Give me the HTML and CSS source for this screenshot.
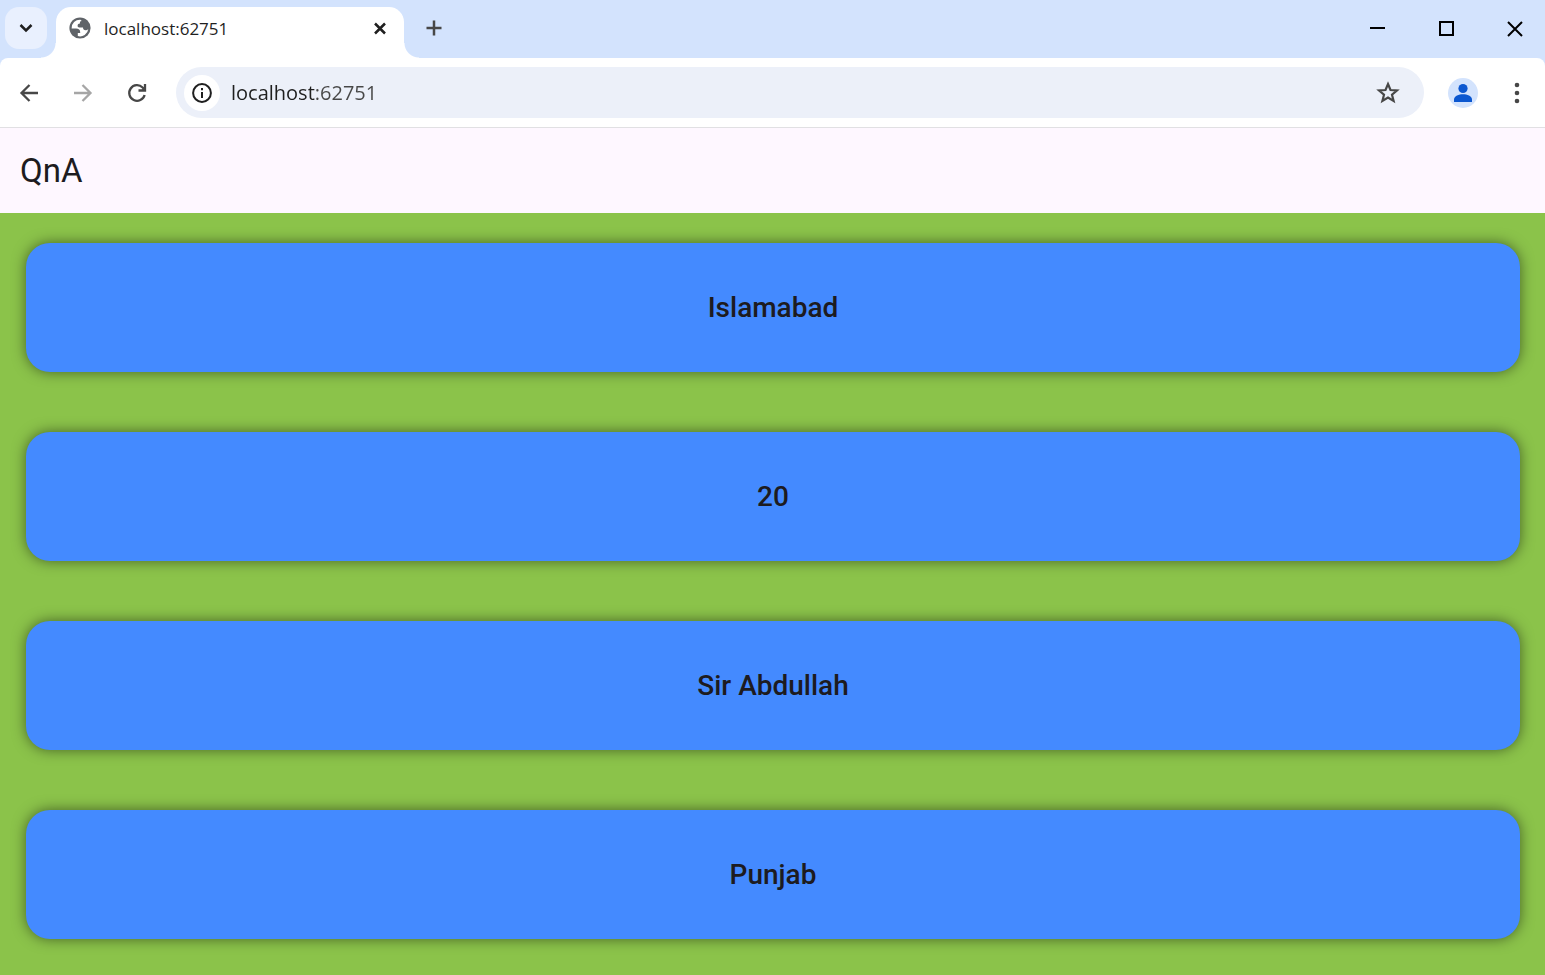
FILE: index.html
```html
<!DOCTYPE html>
<html lang="en">
<head>
<meta charset="utf-8">
<meta name="viewport" content="width=device-width, initial-scale=1">
<title>QnA</title>
<link rel="stylesheet" href="styles.css">
</head>
<body>
<div class="window">
  <header class="tab-strip">
    <button class="tab-search" aria-label="Search tabs">
      <svg width="14" height="10" viewBox="0 0 14 10"><path d="M1.5 2 7 7.5 12.5 2" fill="none" stroke="#1f1f1f" stroke-width="2.5"/></svg>
    </button>
    <div class="tab">
      <svg class="favicon" width="24" height="24" viewBox="0 0 24 24">
        <circle cx="12" cy="11" r="10.6" fill="#5f6368"/>
        <path d="M12.500 2.700A8.400 8.400 0 0 0 3.600 11.500H8c2.800 0 4.200 1.300 4.200 3.400v1.200H9.800v3a8.400 8.400 0 0 0 10.500-7.100c-.8.900-1.700 1.300-2.800 1.200-1.600-.1-2.500-1-2.500-2.800h-3.800c-1 0-1.600-.6-1.600-1.600 0-1.800 1-2.300 2.300-2.400 0-1.500.3-2.300 1.800-2.300z" fill="#fff"/>
      </svg>
      <span class="tab-title">localhost:62751</span>
      <button class="tab-close" aria-label="Close tab">
        <svg width="14" height="14" viewBox="0 0 14 14"><path d="M2 1.500l10 10m0-10l-10 10" stroke="#1f1f1f" stroke-width="2.500"/></svg>
      </button>
    </div>
    <button class="new-tab" aria-label="New tab">
      <svg width="16" height="16" viewBox="0 0 16 16"><path d="M8 .5v15M.5 8h15" stroke="#474747" stroke-width="2.500"/></svg>
    </button>
    <div class="window-controls">
      <button aria-label="Minimize"><svg width="16" height="16" viewBox="0 0 16 16"><path d="M0 7h15" stroke="#000" stroke-width="2"/></svg></button>
      <button aria-label="Maximize"><svg width="16" height="16" viewBox="0 0 16 16"><path d="M1 1h13v13H1z" fill="none" stroke="#000" stroke-width="2"/></svg></button>
      <button aria-label="Close"><svg width="16" height="16" viewBox="0 0 16 16"><path d="M1 1l14 14M15 1L1 15" stroke="#000" stroke-width="2"/></svg></button>
    </div>
  </header>

  <nav class="toolbar">
    <div class="nav-buttons">
      <button aria-label="Back"><svg width="20" height="20" viewBox="0 0 20 20"><path d="M19 10H2.500M10.500 2l-8 8 8 8" fill="none" stroke="#474747" stroke-width="2.300"/></svg></button>
      <button aria-label="Forward" disabled><svg width="20" height="20" viewBox="0 0 20 20"><path d="M1 10h16.500M9.500 2l8 8-8 8" fill="none" stroke="#a6a6a6" stroke-width="2.300"/></svg></button>
      <button aria-label="Reload"><svg width="20" height="20" viewBox="0 0 20 20"><path d="M17.600 12A7.800 7.800 0 1 1 15.600 4.500L17 6" fill="none" stroke="#474747" stroke-width="2.300"/><path d="M11.500 7.500h6.500V1" fill="none" stroke="#474747" stroke-width="2.300"/><path d="M14 7.500L18 3.500v4z" fill="#474747"/></svg></button>
    </div>
    <div class="address-bar">
      <button class="site-info" aria-label="Site information">
        <svg width="20" height="20" viewBox="0 0 20 20"><circle cx="10" cy="10" r="8.900" fill="none" stroke="#1f1f1f" stroke-width="2"/><path d="M10 9v6M10 5v2.200" stroke="#1f1f1f" stroke-width="2"/></svg>
      </button>
      <input class="address" type="text" aria-label="Address" value="localhost:62751">
      <button class="bookmark" aria-label="Bookmark this tab">
        <svg width="24" height="24" viewBox="0 0 24 24"><path d="M12 3l2.500 6 6.500.5-5 4.200 1.600 6.300-5.600-3.400L6.400 20 8 13.700 3 9.500 9.500 9z" fill="none" stroke="#474747" stroke-width="2.200"/></svg>
      </button>
    </div>
    <button class="profile" aria-label="Profile">
      <svg width="30" height="30" viewBox="0 0 30 30"><circle cx="15" cy="10.500" r="4.600" fill="#0b57d0"/><path d="M6 24v-2.500C6 18 11 16.300 15 16.300s9 1.700 9 5.200V24z" fill="#0b57d0"/></svg>
    </button>
    <button class="menu" aria-label="Menu">
      <svg width="6" height="22" viewBox="0 0 6 22" fill="#474747"><circle cx="3" cy="3" r="2.300"/><circle cx="3" cy="11" r="2.300"/><circle cx="3" cy="19" r="2.300"/></svg>
    </button>
  </nav>

  <div class="app-bar"><h1>QnA</h1></div>
  <main class="answers">
    <div class="card">Islamabad</div>
    <div class="card">20</div>
    <div class="card">Sir Abdullah</div>
    <div class="card">Punjab</div>
  </main>
</div>
</body>
</html>
```
FILE: styles.css
```css
* { box-sizing: border-box; }

body {
  margin: 0;
  font-family: "Open Sans", "Noto Sans", sans-serif;
  background: #8bc34a;
}

button {
  display: flex;
  align-items: center;
  justify-content: center;
  flex: none;
  padding: 0;
  border: 0;
  background: none;
}

svg { display: block; flex: none; }

.window {
  display: flex;
  flex-direction: column;
  min-height: 100vh;
  background: #d3e3fd;
}

/* Tab strip */
.tab-strip {
  display: flex;
  align-items: flex-start;
  height: 58px;
  padding: 7px 0 0 5px;
}

.tab-search {
  width: 42px;
  height: 42px;
  border-radius: 14px;
  background: #e9f0fe;
}

.tab {
  position: relative;
  display: flex;
  align-items: center;
  width: 348px;
  height: 51px;
  margin-left: 9px;
  padding: 0 14px 8px 12px;
  border-radius: 15px 15px 0 0;
  background: #fff;
}

.tab::before,
.tab::after {
  content: "";
  position: absolute;
  bottom: 0;
  width: 15px;
  height: 15px;
}

.tab::before {
  right: 100%;
  background: radial-gradient(circle at 0 0, transparent 14px, #fff 15px);
}

.tab::after {
  left: 100%;
  background: radial-gradient(circle at 100% 0, transparent 14px, #fff 15px);
}

.tab-title {
  flex: 1;
  margin-left: 12px;
  font-size: 17px;
  line-height: 24px;
  color: #1f1f1f;
}

.tab-close { width: 20px; height: 20px; }

.new-tab {
  width: 32px;
  height: 42px;
  margin-left: 14px;
}

.window-controls {
  display: flex;
  margin-left: auto;
}

.window-controls button { width: 69px; height: 44px; }

.window-controls button:last-child {
  width: 64px;
  padding-left: 4px;
}

/* Toolbar */
.toolbar {
  display: flex;
  align-items: center;
  height: 70px;
  padding: 0 19px 0 13px;
  border-bottom: 1px solid #e1e0e3;
  border-radius: 8px 8px 0 0;
  background: #fff;
}

.nav-buttons { display: flex; gap: 22px; }

.nav-buttons button { width: 32px; height: 32px; }

.address-bar {
  display: flex;
  flex: 1;
  align-items: center;
  height: 51px;
  margin-left: 23px;
  padding: 0 20px 0 8px;
  border-radius: 26px;
  background: #ecf0f9;
}

.site-info {
  width: 36px;
  height: 36px;
  border-radius: 50%;
  background: #fff;
}

.address {
  flex: 1;
  min-width: 0;
  height: 32px;
  margin-left: 11px;
  padding: 0;
  border: 0;
  outline: 0;
  font: 20px/32px "Open Sans", "Noto Sans", sans-serif;
  color: transparent;
  caret-color: #1f1f1f;
  background: linear-gradient(90deg, #1f1f1f 84px, #474747 84px);
  background-clip: text;
  -webkit-background-clip: text;
}

.bookmark { width: 32px; height: 32px; }

.profile {
  width: 30px;
  height: 30px;
  margin-left: 24px;
  border-radius: 50%;
  background: #d3e3fd;
}

.menu {
  width: 18px;
  height: 32px;
  margin-left: 30px;
}

/* Page */
.app-bar {
  display: flex;
  align-items: center;
  height: 85px;
  padding: 0 20px;
  background: #fef7ff;
}

.app-bar h1 {
  margin: 0;
  font: 400 33px/42px Roboto, sans-serif;
  color: #1d1b20;
}

.answers {
  display: flex;
  flex: 1;
  flex-direction: column;
  gap: 60px;
  padding: 30px 25px 36px 26px;
  background: #8bc34a;
}

.card {
  display: flex;
  align-items: center;
  justify-content: center;
  padding: 44px 24px;
  border-radius: 24px;
  background: #448aff;
  box-shadow: 0 0 14px rgba(0, 0, 0, 0.5);
  font: 500 28px/41px Roboto, sans-serif;
  color: #1d1b20;
}
```
